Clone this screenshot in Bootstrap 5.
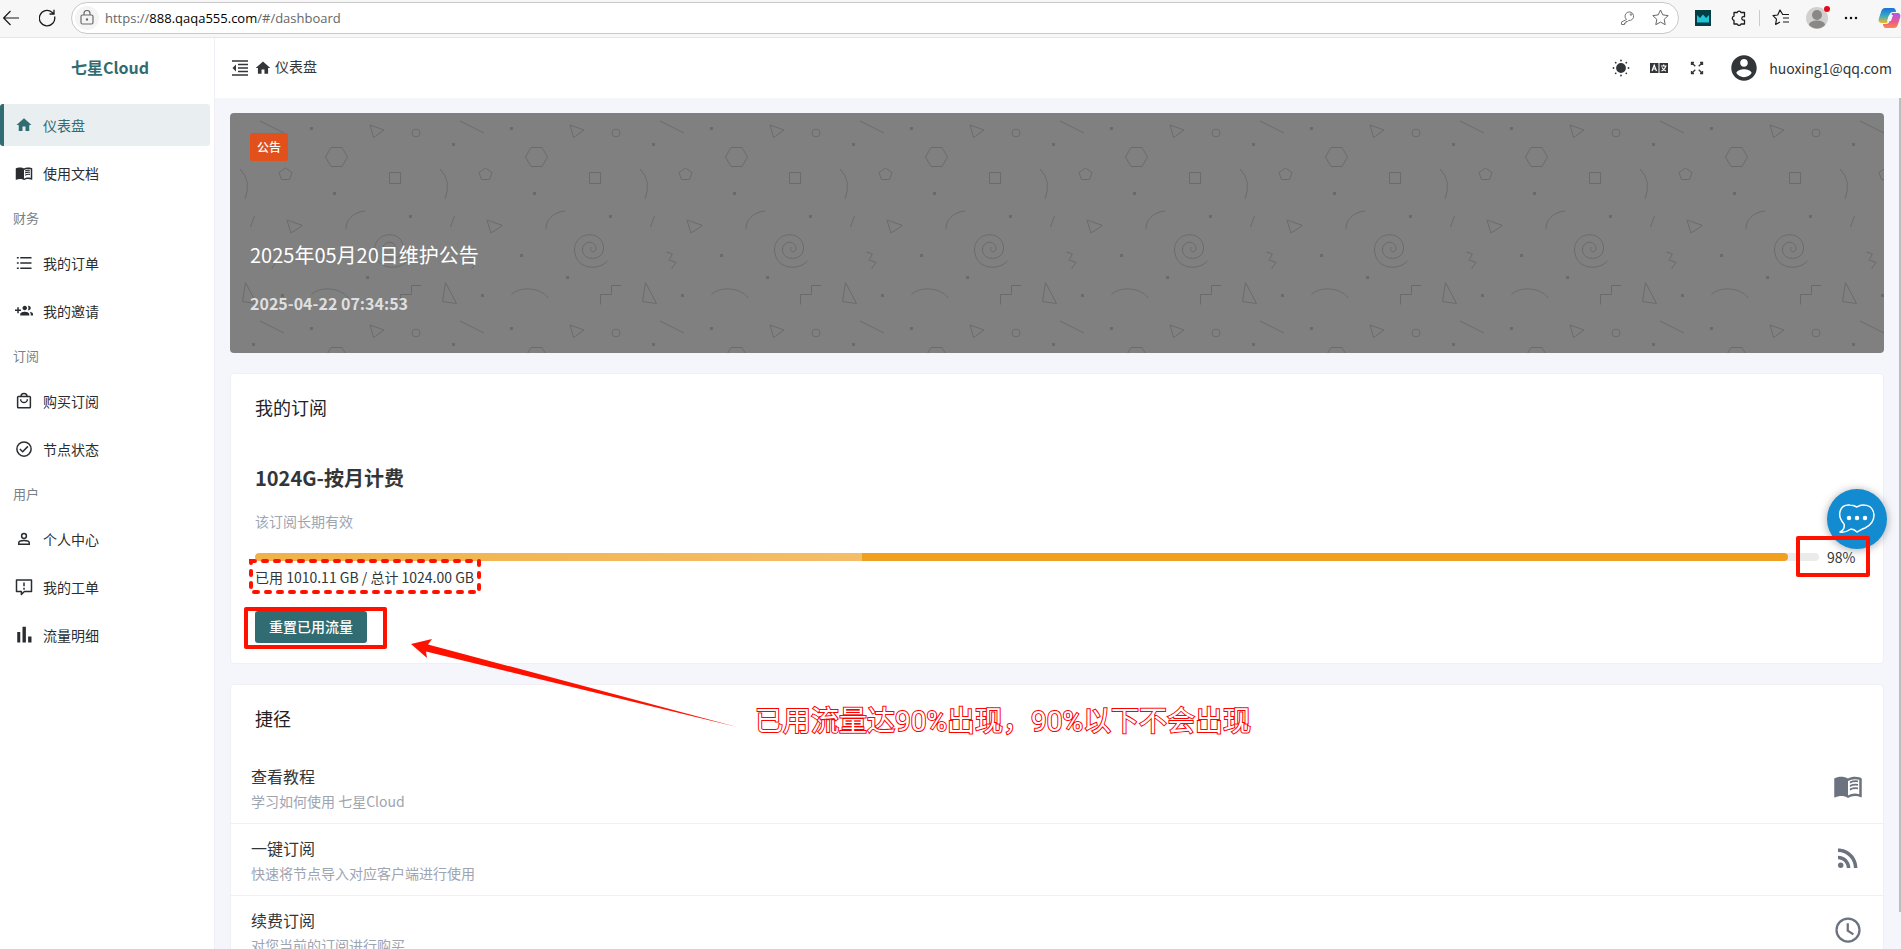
<!DOCTYPE html>
<html lang="zh-CN">
<head>
<meta charset="utf-8">
<meta name="viewport" content="width=device-width, initial-scale=1">
<title>七星Cloud</title>
<link href="https://cdn.jsdelivr.net/npm/bootstrap@5.3.0/dist/css/bootstrap.min.css" rel="stylesheet">
<style>
  :root { --teal: #316c72; --ink: #333639; --mark: #ff1100; }
  body { font-family: "Noto Sans CJK SC", sans-serif; font-size: 14px; line-height: 22px; color: var(--ink); background: #f5f6fb; }
  svg { display: block; flex: none; }
  a { color: inherit; text-decoration: none; }
  .plain { border: 0; background: none; padding: 0; color: inherit; display: block; }

  /* browser bar */
  .chrome { height: 38px; background: #f7f7f7; border-bottom: 1px solid #e6e6ea; color: #1b1b1b; padding: 0 0 2px 3px; }
  .urlbar { height: 32px; background: #fff; border: 1px solid #c9c9c9; border-radius: 16px; margin-left: 15px; padding: 0 9px 0 3px; color: #6b6b6b; }
  .lock { width: 24px; height: 24px; border-radius: 50%; background: #f4f4f4; }
  .url { font-family: "Open Sans", sans-serif; font-size: 13px; color: #666; margin-left: 6px; }
  .url b { font-weight: 400; color: #000; }
  .sep { width: 1px; height: 16px; background: #ccc; }
  .gap-s { margin-left: 12px; }
  .gap-m { margin-left: 16px; }
  .gap-l { margin-left: 20px; }
  .reddot { top: -1px; right: -2px; width: 6px; height: 6px; border-radius: 50%; background: #e00b1c; }

  /* sidebar */
  .sidebar { width: 215px; background: #fff; border-right: 1px solid #efeff5; }
  .brand { height: 60px; padding: 0 0 2px 6px; margin-bottom: 6px; font-size: 16px; font-weight: 700; color: var(--teal); }
  .side-item { height: 42px; margin: 0 4px 6px 0; padding-left: 11px; border-left: 4px solid transparent; gap: 10px; color: #2a2d30; }
  .side-item.on { background: #e9eff1; border-left-color: var(--teal); color: var(--teal); border-radius: 3px; }
  .side-item svg { width: 18px; height: 18px; }
  .side-head { height: 36px; margin-bottom: 6px; padding-left: 13px; font-size: 13px; color: #7c7f83; }

  /* page */
  .topbar { height: 60px; background: #fff; padding: 0 9px 0 16px; }
  .content { padding: 15px; gap: 20px; min-width: 0; }
  .bar-thumb { width: 2px; margin-bottom: 37px; background: #bdbdbd; }
  .banner { height: 240px; border-radius: 4px; background: #808080; padding: 20px; color: #fff; overflow: hidden; }
  .banner > div { position: relative; }
  .notice { width: 38px; height: 28px; border-radius: 2px; background: #e2501b; font-size: 12px; font-weight: 500; }
  .news { font-size: 20px; line-height: 28px; margin-top: 80px; }
  .date { font-size: 16px; line-height: 24px; font-weight: 700; color: #dfdfdf; margin-top: 22px; }
  .panel { background: #fff; border: 1px solid #efeff5; border-radius: 4px; }
  .panel h2 { font-size: 18px; line-height: 28px; font-weight: 400; color: #1f2225; margin: 0; }
  .panel .head { padding: 19px 24px 20px; }
  .sub-box { padding: 19px 24px 20px; }
  .plan { font-size: 20px; line-height: 30px; font-weight: 700; margin: 42px 0 17px; }
  .muted { color: #9ea4b0; }
  .usage { margin-top: 15px; height: 20px; }
  .usage .progress { height: 8px; border-radius: 5px; background: #ebebeb; }
  .usage .progress-bar { border-radius: 5px; background: linear-gradient(90deg, #f1b148, #f4bd68 607px, #f0a020 607px); }
  .pct { width: 32px; margin-left: 8px; }
  .total { line-height: 20px; }
  .btn-reset { margin-top: 24px; height: 32px; padding: 5px 14px 7px; font-size: 14px; line-height: 20px; font-weight: 500; border: 0; border-radius: 3px; background: var(--teal); color: #fff; }
  .btn-reset:hover { background: #26575c; color: #fff; }
  .short { padding: 12px 20px 11px; border-bottom: 1px solid #efeff5; }
  .short h3 { font-size: 16px; line-height: 24px; font-weight: 400; margin: 0 0 2px; }
  .short svg { width: 30px; height: 30px; margin-bottom: 4px; color: #6b7280; }

  /* hand-drawn marks and floating chat, all over the content */
  .hl { position: absolute; border: 4px solid var(--mark); border-radius: 2px; pointer-events: none; z-index: 5; }
  .hl-btn { left: -11px; top: 20px; width: 143px; height: 42px; }
  .hl-pct { left: -31px; top: -10px; width: 74px; height: 41px; z-index: 20; }
  .dashbox { position: absolute; left: -6px; top: -9px; }
  .arrow { position: absolute; left: 180px; top: 263px; z-index: 6; }
  .remark { position: absolute; left: 524px; top: 18px; font-family: Roboto, "Noto Sans CJK SC", sans-serif; font-size: 28px; line-height: 38px; color: #fff; -webkit-text-stroke: 2px #f00; paint-order: stroke fill; white-space: nowrap; }
  .chat { position: fixed; right: 14px; top: 489px; width: 60px; height: 60px; border-radius: 50%; background: #138bd0; box-shadow: 0 1px 8px rgba(0,0,0,.35); z-index: 10; }
</style>
</head>
<body>
<div class="d-flex flex-column vh-100 overflow-hidden">

  <header class="chrome d-flex align-items-center flex-shrink-0 overflow-hidden">
    <button class="plain" aria-label="后退"><svg width="16" height="16" viewBox="0 0 16 16" fill="none" stroke="currentColor" stroke-width="1.200"><path d="M16 8H.7M7.500 1 .7 8l6.800 7"/></svg></button>
    <button class="plain gap-l" aria-label="刷新"><svg width="17" height="18" viewBox="1 0 17 18" fill="none" stroke="currentColor" stroke-width="1.300"><path d="M16.600 7.500A7.700 7.700 0 1 1 14 3.200L16 5M16 .8V5h-4.500"/></svg></button>
    <div class="urlbar d-flex align-items-center flex-grow-1">
      <span class="lock d-flex align-items-center justify-content-center"><svg width="14" height="15" viewBox="0 0 14 15" fill="none" stroke="currentColor" stroke-width="1.200"><rect x="1" y="5" width="12" height="9" rx="1.500"/><path d="M4 5V3.500a3 3 0 0 1 6 0V5"/><circle cx="7" cy="9.500" r=".6" fill="currentColor"/></svg></span>
      <a class="url" href="#/dashboard">https://<b>888.qaqa555.com</b>/#/dashboard</a>
      <svg class="ms-auto" width="16" height="16" viewBox="0 0 16 16" fill="none" stroke="#777"><path d="M6.500 9.500A4.300 4.300 0 1 1 8.700 10.500L7.500 11.500H6V13H4.500v1.500H1.500V12z" stroke-linejoin="round"/><circle cx="11" cy="4.500" r=".8"/></svg>
      <svg class="gap-m" width="17" height="17" viewBox="0 0 17 17" fill="none" stroke="#666" stroke-linejoin="round"><path d="m8.500 1 2.300 4.900 5.400.7-4 3.700 1 5.400-4.700-2.600-4.700 2.600 1-5.400-4-3.700 5.400-.7z"/></svg>
    </div>
    <svg class="gap-m" width="16" height="16" viewBox="0 0 16 16"><path fill="#033d45" d="M0 0h16v16H0z"/><path fill="#21c4d4" d="M2 12.500V5l3 3L8 4.500 11 8l3-3v7.500z"/></svg>
    <svg class="gap-l" width="16" height="16" viewBox="0 0 16 16" fill="none" stroke="currentColor" stroke-width="1.300" stroke-linejoin="round"><path d="M3 2.500h3.200a2 2 0 0 1 3.800 0h3.500v4.200h-1a1.700 1.700 0 0 0 0 3.400h1V14H10a2 2 0 0 1-3.800 0H3v-3.600a2.200 2.200 0 0 1 0-4.300z"/></svg>
    <span class="sep gap-s"></span>
    <svg class="gap-s" width="18" height="17" viewBox="0 0 18 17" fill="none" stroke="currentColor" stroke-width="1.200" stroke-linejoin="round"><path d="M17 5.500h-6.300L8 1 5.700 6 1 6.700l3.500 3.500-.9 5.300L8 13M11 9h6M11 13h6"/></svg>
    <span class="position-relative gap-m"><svg width="22" height="22" viewBox="0 0 22 22"><circle cx="11" cy="11" r="11" fill="#d2d0ce"/><circle cx="11" cy="8" r="5" fill="#8a8886"/><path fill="#8a8886" d="M3 18c0-6 16-6 16 0a11 11 0 0 1-16 0z"/></svg><i class="reddot position-absolute"></i></span>
    <svg class="gap-m" width="14" height="4" viewBox="0 0 14 4"><path d="M2 2h0M7 2h0M12 2h0" stroke="#111" stroke-width="2.500" stroke-linecap="round"/></svg>
    <svg class="gap-l" width="23" height="22" viewBox="0 0 23 22"><defs><linearGradient id="ca" x2="0" y2="1"><stop stop-color="#1f6fd8"/><stop offset=".5" stop-color="#2fa9c9"/><stop offset="1" stop-color="#f2b92c"/></linearGradient><linearGradient id="cb" x2="0" y2="1"><stop stop-color="#a45bea"/><stop offset=".6" stop-color="#ef5a8a"/><stop offset="1" stop-color="#f8894a"/></linearGradient></defs><path fill="url(#ca)" d="M7 1h8c2 0 3 2 3 4h-3c-2 0-3 1-4 4l-2 7H4c-3 0-4-2-3-5l2-6c1-3 2-4 4-4z"/><path fill="url(#cb)" d="M16 21H8c-2 0-3-2-3-4h3c2 0 3-1 4-4l2-7h5c3 0 4 2 3 5l-2 6c-1 3-2 4-4 4z"/><path fill="#f7f7f7" d="M11 8h4l-2 6H9z"/></svg>
  </header>

  <div class="d-flex flex-grow-1" style="min-height:0">
    <nav class="sidebar flex-shrink-0">
      <div class="brand d-flex align-items-center justify-content-center">七星Cloud</div>
      <a class="side-item on d-flex align-items-center" href="#"><svg viewBox="0 0 24 24" fill="currentColor"><path d="M10 20v-6h4v6h5v-8h3L12 3 2 12h3v8z"/></svg>仪表盘</a>
      <a class="side-item d-flex align-items-center" href="#"><svg viewBox="0 0 24 24"><use href="#book"/></svg>使用文档</a>
      <div class="side-head d-flex align-items-center">财务</div>
      <a class="side-item d-flex align-items-center" href="#"><svg viewBox="0 0 24 24" stroke="currentColor" stroke-width="2"><path d="M7 5h15M7 12h15M7 19h15M2.500 5h2.500M2.500 12H5M2.500 19H5"/></svg>我的订单</a>
      <a class="side-item d-flex align-items-center" href="#"><svg viewBox="0 0 24 24" fill="currentColor"><path d="M8 10H5V7H3v3H0v2h3v3h2v-3h3v-2zm10 1c1.660 0 2.990-1.340 2.990-3S19.660 5 18 5c-.32 0-.63.05-.91.14.57.81.9 1.790.9 2.860s-.34 2.040-.9 2.860c.28.09.59.14.91.14zm-5 0c1.660 0 2.990-1.340 2.990-3S14.660 5 13 5c-1.660 0-3 1.340-3 3s1.340 3 3 3zm6.620 2.160c.83.73 1.380 1.660 1.380 2.840v2h3v-2c0-1.540-2.370-2.490-4.380-2.840zM13 13c-2 0-6 1-6 3v2h12v-2c0-2-4-3-6-3z"/></svg>我的邀请</a>
      <div class="side-head d-flex align-items-center">订阅</div>
      <a class="side-item d-flex align-items-center" href="#"><svg viewBox="0 0 24 24" fill="none" stroke="currentColor" stroke-width="2"><rect x="3.500" y="6" width="17" height="15" rx="1"/><path d="M8 6a4 4 0 0 1 8 0M7.500 9.500a4.500 4.500 0 0 0 9 0"/></svg>购买订阅</a>
      <a class="side-item d-flex align-items-center" href="#"><svg viewBox="0 0 24 24" fill="none" stroke="currentColor" stroke-width="2"><circle cx="12" cy="12" r="9.500"/><path d="m6.500 12 3.700 3.700 7-7.200"/></svg>节点状态</a>
      <div class="side-head d-flex align-items-center">用户</div>
      <a class="side-item d-flex align-items-center" href="#"><svg viewBox="0 0 24 24" fill="none" stroke="currentColor" stroke-width="2"><circle cx="12" cy="8" r="3.200"/><path d="M5 19v-2c0-4 14-4 14 0v2z"/></svg>个人中心</a>
      <a class="side-item d-flex align-items-center" href="#"><svg viewBox="0 0 24 24" fill="none" stroke="currentColor" stroke-width="2"><path d="M2 2.500h20V18H12.500L8.500 22v-4H2z" stroke-linejoin="round"/><path d="M12 6v5M12 13v2.500"/></svg>我的工单</a>
      <a class="side-item d-flex align-items-center" href="#"><svg viewBox="0 0 24 24" fill="currentColor"><path d="M3 8h4v14H3zM10 1h4.500v21H10zM17.500 14H22v8h-4.500z"/></svg>流量明细</a>
    </nav>

    <div class="d-flex flex-column flex-grow-1" style="min-width:0">
      <div class="topbar d-flex align-items-center flex-shrink-0">
        <button class="plain" aria-label="收起菜单"><svg width="18" height="18" viewBox="0 0 18 18" fill="none" stroke="currentColor" stroke-width="1.600"><path d="M1 2h16M7 5.500h10M7 9h10M7 12.500h10M1 16h16"/><path d="M5 5.500v7L1.500 9z" fill="currentColor" stroke="none"/></svg></button>
        <a class="d-flex align-items-center pb-1" style="gap:4px;margin-left:6px" href="#"><svg class="mt-1" width="16" height="16" viewBox="1 2 22 20" fill="currentColor"><path d="M10 20v-6h4v6h5v-8h3L12 3 2 12h3v8z"/></svg>仪表盘</a>
        <div class="d-flex align-items-center ms-auto" style="gap:20px">
          <button class="plain" aria-label="主题"><svg width="18" height="18" viewBox="0 0 18 18" fill="currentColor" stroke="currentColor" stroke-width="1.800" stroke-linecap="round"><circle cx="9" cy="9" r="4" /><path d="M9 1.500h0M9 16.500h0M1.500 9h0M16.500 9h0M3.700 3.700h0M14.300 3.700h0M3.700 14.300h0M14.300 14.300h0"/></svg></button>
          <button class="plain" aria-label="语言"><svg width="18" height="18" viewBox="0 0 18 18"><path fill="currentColor" d="M0 4h8.500v10H0zM9.500 4H18v10H9.500z"/><path fill="none" stroke="#fff" stroke-width="1.200" d="M2 12 4.200 6.200 6.500 12M3 10h2.500M11 7h5.500M13.700 5.500V7M15.500 7c0 2-2 4-4 5M12 8.500c1 2 2.500 3 4 3.500"/></svg></button>
          <button class="plain me-1" aria-label="全屏"><svg width="18" height="18" viewBox="0 0 18 18" fill="none" stroke="currentColor" stroke-width="1.300"><path d="M3.500 6V3.500H6M12 3.500h2.500V6M14.500 12v2.500H12M6 14.500H3.500V12M3.500 3.500l3.800 3.800M14.500 3.500l-3.800 3.800M14.500 14.500l-3.800-3.800M3.500 14.500l3.800-3.800"/></svg></button>
          <button class="plain d-flex align-items-center" style="gap:11px"><svg width="28" height="28" viewBox="1 1 22 22" fill="currentColor"><path d="M12 2C6.480 2 2 6.480 2 12s4.480 10 10 10 10-4.480 10-10S17.520 2 12 2zm0 3c1.660 0 3 1.340 3 3s-1.340 3-3 3-3-1.340-3-3 1.340-3 3-3zm0 14.200c-2.500 0-4.710-1.280-6-3.220.03-1.990 4-3.080 6-3.080 1.990 0 5.970 1.090 6 3.080-1.290 1.940-3.500 3.220-6 3.220z"/></svg>huoxing1@qq.com</button>
        </div>
      </div>

      <div class="d-flex flex-grow-1 overflow-hidden">
        <main class="content d-flex flex-column flex-grow-1">
          <section class="banner position-relative flex-shrink-0">
            <svg class="position-absolute top-0 start-0" width="100%" height="100%">
              <defs><pattern id="doodle" width="200" height="200" patternUnits="userSpaceOnUse">
                <g fill="none" stroke="#6a6a6a"><path d="m30 8 24 12M140 12l14 5-10.500 7.500zM95.500 44l5.500-9.500h11l5.500 9.500-5.500 9.500h-11zM55.500 55l6.500 4.500-2.500 7h-8l-2.500-7zM159.500 59.500h11v11h-11zM10 56q12 12 5 30M24.500 103l-4 11M57 107l15.500 5.500L61 120zM135 98c-12 1-20 10-19 18.500M36.500 139l6 2-3.500 6 7 2.500-4.500 6.500M15.500 169.500l11 21-14-2zM81.500 181.500c8-8 28-8 37 3.500M170.500 191.500v-10h11v-9h9.500"/><circle cx="186" cy="20" r="4"/>
                <path d="M161 134c-2 5 4 7 5 2 0-10-14-8-13.500 1 1 12 21 11 21-2-1-19-29-17-29 2 1 20 24 21 33 11"/></g>
                <path fill="#6a6a6a" d="M80 14h3v3h-3zM22 30h3v3h-3zM103 79h3v3h-3zM179 102h3v3h-3zM90 141h3v3h-3zM136 163h3v3h-3zM51 181h3v3h-3z"/>
              </pattern></defs>
              <rect width="100%" height="100%" fill="url(#doodle)"/>
            </svg>
            <div class="notice d-flex align-items-center justify-content-center">公告</div>
            <div class="news">2025年05月20日维护公告</div>
            <div class="date">2025-04-22 07:34:53</div>
          </section>

          <section class="panel sub-box position-relative flex-shrink-0">
            <h2>我的订阅</h2>
            <div class="plan">1024G-按月计费</div>
            <div class="muted">该订阅长期有效</div>
            <div class="usage d-flex align-items-center">
              <div class="progress flex-grow-1" role="progressbar" aria-label="已用流量" aria-valuenow="98" aria-valuemin="0" aria-valuemax="100"><div class="progress-bar" style="width:98%"></div></div>
              <div class="pct position-relative">98%<i class="hl hl-pct"></i></div>
            </div>
            <div class="total position-relative">已用 1010.11 GB / 总计 1024.00 GB
              <svg class="dashbox" width="232" height="36" viewBox="0 0 232 36" fill="none" stroke="#ff1100" stroke-width="4" stroke-linecap="round" stroke-dasharray="4 8"><rect x="2" y="3" width="228" height="31"/></svg>
            </div>
            <div class="position-relative"><button class="btn btn-reset">重置已用流量</button><i class="hl hl-btn"></i></div>
            <svg class="arrow" width="328" height="92" viewBox="0 0 328 92" fill="#ff1100"><path d="M0 7 21 2l-4 5.500L326 90 15 14.500l1 6.500z"/></svg>
          </section>

          <section class="panel position-relative flex-shrink-0">
            <h2 class="head">捷径</h2>
            <div class="remark">已用流量达90%出现，90%以下不会出现</div>
            <a class="short d-flex align-items-center justify-content-between" href="#"><div><h3>查看教程</h3><div class="muted">学习如何使用 七星Cloud</div></div><svg viewBox="0 0 24 24"><use href="#book"/></svg></a>
            <a class="short d-flex align-items-center justify-content-between" href="#"><div><h3>一键订阅</h3><div class="muted">快速将节点导入对应客户端进行使用</div></div><svg viewBox="0 0 24 24" fill="currentColor"><path d="M6.180 15.640a2.180 2.180 0 1 0 0 4.360 2.180 2.180 0 0 0 0-4.360zM4 4.440v2.830c7.030 0 12.730 5.700 12.730 12.730h2.830C19.560 11.410 12.590 4.440 4 4.440zm0 5.660v2.830c3.900 0 7.070 3.170 7.070 7.070h2.830c0-5.470-4.430-9.900-9.900-9.900z"/></svg></a>
            <a class="short d-flex align-items-center justify-content-between" href="#"><div><h3>续费订阅</h3><div class="muted">对您当前的订阅进行购买</div></div><svg viewBox="0 0 24 24" fill="none" stroke="currentColor" stroke-width="1.800"><circle cx="12" cy="12" r="9.200"/><path d="M11.800 6.500v6l4.500 3"/></svg></a>
          </section>
        </main>
        <div class="bar-thumb"></div>
      </div>
    </div>
  </div>
</div>

<button class="chat plain d-flex align-items-center justify-content-center" aria-label="在线客服"><svg width="38" height="32" viewBox="0 0 38 32" fill="none" stroke="#fff" stroke-width="1.500" stroke-linejoin="round"><path d="M19 4C23 1 35 0 36 12c0 7-5 11-9 13-3 1-6 3-8 4-2-2-4-3-6-3-3 2-6 4-11 3 4-2 5-4 4-8C-2 12 2 1 12 2c3 0 5 1 7 2z"/><path d="M11 15h0M19 15h0M27 15h0" stroke-width="4.500" stroke-linecap="round"/></svg></button>

<svg width="0" height="0" class="position-absolute"><defs><symbol id="book" viewBox="0 0 24 24"><g fill="currentColor"><path d="M21 5c-1.110-.35-2.330-.5-3.500-.5-1.950 0-4.050.4-5.500 1.500-1.450-1.100-3.550-1.500-5.500-1.500S2.450 4.900 1 6v14.650c0 .25.25.5.5.5.1 0 .15-.05.25-.05C3.100 20.450 5.050 20 6.500 20c1.950 0 4.050.4 5.500 1.500 1.350-.85 3.800-1.500 5.500-1.500 1.650 0 3.350.3 4.750 1.050.1.05.15.05.25.05.25 0 .5-.25.5-.5V6c-.6-.45-1.250-.75-2-1zm0 13.500c-1.100-.35-2.300-.5-3.500-.5-1.700 0-4.150.65-5.500 1.500V8c1.350-.85 3.800-1.500 5.500-1.500 1.200 0 2.400.15 3.500.5v11.500z"/><path d="M13.500 10q3-1.500 6.500-1v-1.500q-3.500-.5-6.500.8zM13.500 12.800q3-1.500 6.500-1v-1.500q-3.500-.5-6.500.8zM13.500 15.600q3-1.500 6.500-1v-1.500q-3.500-.5-6.500.8z"/></g></symbol></defs></svg>
<script src="https://cdn.jsdelivr.net/npm/bootstrap@5.3.0/dist/js/bootstrap.bundle.min.js"></script>
</body>
</html>
